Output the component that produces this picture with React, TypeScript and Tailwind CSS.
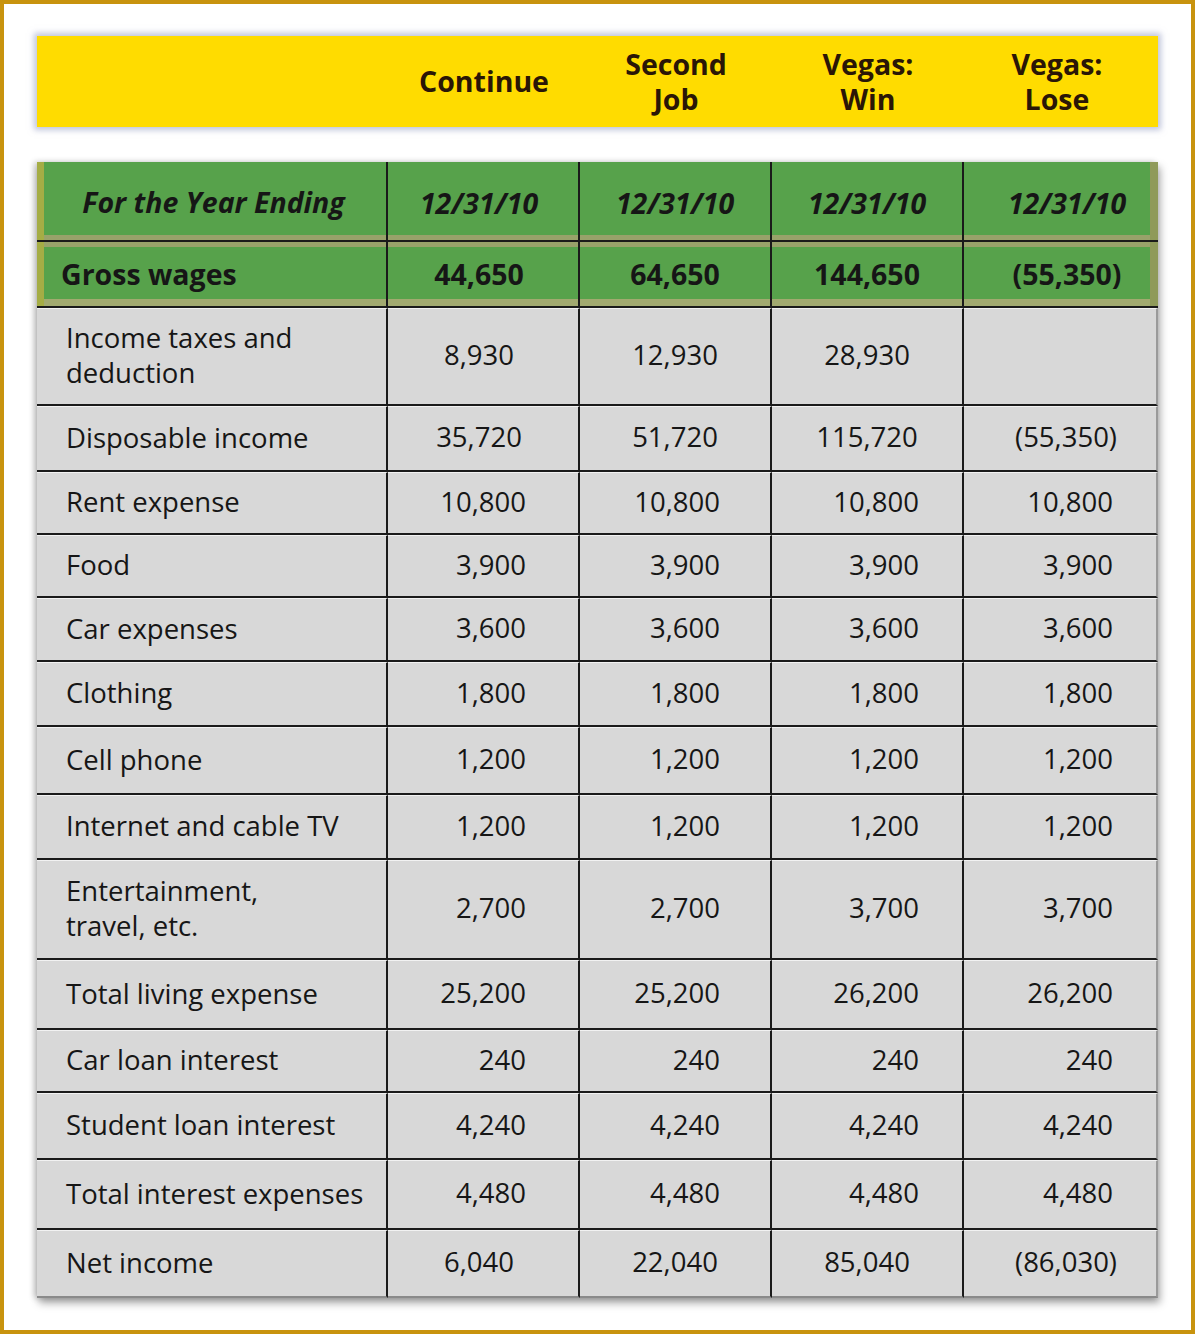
const font = { fontFamily: '"Open Sans", "Liberation Sans", sans-serif' };

type Row = {
  label: string[];
  h: number;
  align: "center" | "right";
  vals: string[];
};

const rows: Row[] = [
  { label: ["Income taxes and", "deduction"], h: 98, align: "center", vals: ["8,930", "12,930", "28,930", ""] },
  { label: ["Disposable income"], h: 66, align: "center", vals: ["35,720", "51,720", "115,720", "(55,350)"] },
  { label: ["Rent expense"], h: 63, align: "right", vals: ["10,800", "10,800", "10,800", "10,800"] },
  { label: ["Food"], h: 63, align: "right", vals: ["3,900", "3,900", "3,900", "3,900"] },
  { label: ["Car expenses"], h: 64, align: "right", vals: ["3,600", "3,600", "3,600", "3,600"] },
  { label: ["Clothing"], h: 65, align: "right", vals: ["1,800", "1,800", "1,800", "1,800"] },
  { label: ["Cell phone"], h: 68, align: "right", vals: ["1,200", "1,200", "1,200", "1,200"] },
  { label: ["Internet and cable TV"], h: 65, align: "right", vals: ["1,200", "1,200", "1,200", "1,200"] },
  { label: ["Entertainment,", "travel, etc."], h: 100, align: "right", vals: ["2,700", "2,700", "3,700", "3,700"] },
  { label: ["Total living expense"], h: 70, align: "right", vals: ["25,200", "25,200", "26,200", "26,200"] },
  { label: ["Car loan interest"], h: 63, align: "right", vals: ["240", "240", "240", "240"] },
  { label: ["Student loan interest"], h: 67, align: "right", vals: ["4,240", "4,240", "4,240", "4,240"] },
  { label: ["Total interest expenses"], h: 70, align: "right", vals: ["4,480", "4,480", "4,480", "4,480"] },
  { label: ["Net income"], h: 68, align: "center", vals: ["6,040", "22,040", "85,040", "(86,030)"] },
];

const scenarios = [["Continue"], ["Second", "Job"], ["Vegas:", "Win"], ["Vegas:", "Lose"]];
const rightPad = ["pr-[52px]", "pr-[50px]", "pr-[43px]", "pr-[43px]"];
const centerPad = ["pr-2", "", "", "pl-3"];
const cols = "grid grid-cols-[351px_192px_192px_192px_194px]";

export default function App() {
  return (
    <div
      className="w-[1195px] h-[1334px] border-4 border-[#c8930e] bg-white pt-[32px] pl-[33px] text-[#161616]"
      style={font}
    >
      {/* scenario bar */}
      <div className={`${cols} w-[1121px] h-[91px] bg-[#ffdc00] shadow-[0_0_6px_3px_rgba(140,150,190,0.55)]`}>
        <div />
        {scenarios.map((s, i) => (
          <div
            key={i}
            className={`flex flex-col items-center justify-center text-[28.5px] font-bold leading-[35px] text-[#2a1606] ${
              i === 3 ? "pr-2" : ""
            }`}
          >
            {s.map((l) => (
              <span key={l}>{l}</span>
            ))}
          </div>
        ))}
      </div>

      {/* table */}
      <div className="mt-[35px] w-[1121px] shadow-[2px_5px_8px_rgba(0,0,0,0.35),-3px_0_6px_rgba(0,0,0,0.2)]">
        <div className={`${cols} h-[80px] bg-[#57a24b]`}>
          <div className="flex items-center justify-center pl-1 pt-[2px] border-r-2 border-b-2 border-[#1a1a1a] text-[28.5px] font-bold italic shadow-[inset_7px_0_0_#a5ad45,inset_0_-5px_0_#99a26a]">
            For the Year Ending
          </div>
          {[0, 1, 2, 3].map((i) => (
            <div
              key={i}
              className={`flex items-center justify-center pt-[4px] border-b-2 border-[#1a1a1a] text-[28.5px] font-bold italic ${
                i < 3
                  ? "border-r-2 shadow-[inset_0_-5px_0_#99a26a]"
                  : "shadow-[inset_-8px_0_0_#8f9a5a,inset_0_-5px_0_#99a26a]"
              } ${centerPad[i]}`}
            >
              12/31/10
            </div>
          ))}
        </div>

        <div className={`${cols} h-[66px] bg-[#57a24b]`}>
          <div className="flex items-center pl-[24px] border-r-2 border-b-2 border-[#1a1a1a] text-[28.5px] font-bold shadow-[inset_7px_0_0_#a5ad45,inset_0_5px_0_#99a26a,inset_0_-7px_0_#a2aa70]">
            Gross wages
          </div>
          {["44,650", "64,650", "144,650", "(55,350)"].map((v, i) => (
            <div
              key={i}
              className={`flex items-center justify-center border-b-2 border-[#1a1a1a] text-[28.5px] font-bold ${
                i < 3
                  ? "border-r-2 shadow-[inset_0_5px_0_#99a26a,inset_0_-7px_0_#a2aa70]"
                  : "shadow-[inset_-8px_0_0_#8f9a5a,inset_0_5px_0_#99a26a,inset_0_-7px_0_#a2aa70]"
              } ${centerPad[i]}`}
            >
              {v}
            </div>
          ))}
        </div>

        {rows.map((r, ri) => (
          <div
            key={ri}
            className={`${cols} bg-[#d8d8d8]`}
            style={{ height: r.h }}
          >
            <div
              className={`flex flex-col justify-center pl-[29px] pb-[3px] border-r-2 border-[#1a1a1a] text-[27.5px] leading-[35px] border-t border-t-[#f2f2f2] ${
                ri < rows.length - 1 ? "border-b-2" : "border-b-2 border-b-[#8a8a8a]"
              }`}
            >
              {r.label.map((l) => (
                <span key={l}>{l}</span>
              ))}
            </div>
            {r.vals.map((v, i) => (
              <div
                key={i}
                className={`flex items-center pb-[3px] text-[27.5px] border-[#1a1a1a] border-t border-t-[#f2f2f2] ${
                  r.align === "center" ? `justify-center ${centerPad[i]}` : `justify-end ${rightPad[i]}`
                } ${i < 3 ? "border-r-2" : "border-r-2 border-r-[#9a9a9a]"} ${
                  ri < rows.length - 1 ? "border-b-2" : "border-b-2 border-b-[#8a8a8a]"
                }`}
              >
                {v}
              </div>
            ))}
          </div>
        ))}
      </div>
    </div>
  );
}
